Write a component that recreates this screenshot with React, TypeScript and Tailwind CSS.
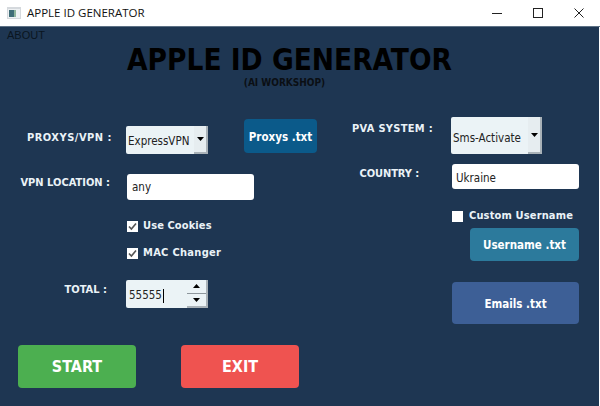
const labelFont = "font-['DejaVu_Sans_Condensed'] font-bold text-[11px] text-[#eaf2f7] whitespace-nowrap";
const fieldFont = "font-['DejaVu_Sans_Condensed'] text-[11.5px] text-[#222]";

function Caret() {
  return (
    <svg width="7" height="6" viewBox="0 0 7 4" className="block">
      <path d="M0 0h7L3.5 4z" fill="#000" />
    </svg>
  );
}

function CheckBox({ checked }: { checked?: boolean }) {
  return (
    <span className="flex h-[11px] w-[11px] items-center justify-center bg-white">
      {checked && (
        <svg width="9" height="9" viewBox="0 0 9 9">
          <path d="M1 4.5l2.4 2.6L8 1.5" fill="none" stroke="#555" strokeWidth="1.6" />
        </svg>
      )}
    </span>
  );
}

function Select({ value, w, h, btn, pad }: { value: string; w: string; h: string; btn: string; pad: string }) {
  return (
    <div className={`flex ${w} ${h} rounded-[2px] bg-[#ebf3f6]`}>
      <div className={`flex flex-1 items-center pl-[2px] ${pad} ${fieldFont}`}>{value}</div>
      <div className={`flex ${btn} items-center justify-center border-r-2 border-b-2 border-[#a9b2b8] bg-[#e6edf0]`}>
        <Caret />
      </div>
    </div>
  );
}

function Btn({ children, cls }: { children: string; cls: string }) {
  return (
    <div className={`flex items-center justify-center rounded-[4px] font-['DejaVu_Sans_Condensed'] font-bold text-white ${cls}`}>
      {children}
    </div>
  );
}

export default function App() {
  return (
    <div className="flex h-[406px] w-[600px] flex-col overflow-hidden bg-[#1e3652]">
      <div className="flex h-[27px] shrink-0 items-center border-b border-[#5d7185] bg-white pl-[7px]">
        <svg width="14" height="12" viewBox="0 0 14 12" className="mr-[6px]">
          <rect width="14" height="12" fill="#d5d9dd" />
          <rect x="1" y="2" width="12" height="9" fill="#eef1f3" />
          <rect x="2" y="3" width="5" height="7" fill="#3f6d77" />
          <rect x="7" y="3" width="2" height="7" fill="#8fb59d" />
        </svg>
        <span className="font-['Open_Sans'] text-[11.5px] text-[#111]">APPLE ID GENERATOR</span>
        <div className="ml-auto flex items-center">
          <svg width="10" height="10" viewBox="0 0 10 10" className="mr-[31px]"><path d="M0 5.5h10" stroke="#222" /></svg>
          <svg width="10" height="10" viewBox="0 0 10 10" className="mr-[31px]"><rect x=".5" y=".5" width="9" height="9" fill="none" stroke="#222" /></svg>
          <svg width="10" height="10" viewBox="0 0 10 10" className="mr-[16px]"><path d="M.5.5l9 9M9.5.5l-9 9" stroke="#222" /></svg>
        </div>
      </div>

      <div className="flex flex-1 flex-col border-r border-white">
        <div className="pl-[7px] pt-[2px] font-['Liberation_Sans'] text-[11px] leading-[13px] text-[#0a1520]">ABOUT</div>
        <div className="mt-[1px] pr-[20px] text-center font-['DejaVu_Sans_Condensed'] text-[29.5px] leading-[34px] font-bold text-black">
          APPLE ID GENERATOR
        </div>
        <div className="pr-[30px] pt-[1px] text-center font-['DejaVu_Sans_Condensed'] text-[10px] leading-[10px] font-bold text-[#0b0f14]">(AI WORKSHOP)</div>

        <div className="flex flex-1">
          <div className="flex w-[350px] shrink-0 flex-col">
            <div className="mt-[31px] flex items-start">
              <div className={`mt-[11px] w-[112px] text-right tracking-[0.5px] ${labelFont}`}>PROXYS/VPN :</div>
              <div className="ml-[14px] mt-[7px]">
                <Select value="ExpressVPN" w="w-[82px]" h="h-[28px]" btn="w-[14px]" pad="pt-[4px]" />
              </div>
              <Btn cls="ml-[36px] h-[34px] w-[73px] bg-[#0b5a8a] pt-[3px] text-[11.5px]">Proxys .txt</Btn>
            </div>
            <div className="mt-[20px] flex items-center">
              <div className={`w-[110px] pb-[8px] text-right ${labelFont}`}>VPN LOCATION :</div>
              <div className={`ml-[17px] flex h-[26px] w-[127px] items-center rounded-[3px] bg-white pl-[5px] pt-[2px] ${fieldFont}`}>any</div>
            </div>
            <div className="ml-[127px] mt-[19px] flex h-[14px] items-center gap-[5px]">
              <CheckBox checked />
              <span className={`tracking-[0.1px] ${labelFont}`}>Use Cookies</span>
            </div>
            <div className="ml-[127px] mt-[13px] flex h-[14px] items-center gap-[5px]">
              <CheckBox checked />
              <span className={`tracking-[0.3px] ${labelFont}`}>MAC Changer</span>
            </div>
            <div className="mt-[20px] flex items-center">
              <div className={`w-[107px] pb-[8px] text-right ${labelFont}`}>TOTAL :</div>
              <div className="ml-[19px] flex h-[28px] w-[82px] rounded-[2px] bg-[#ebf3f6]">
                <div className={`flex flex-1 items-center pl-[3px] pt-[4px] ${fieldFont}`}>
                  55555<span className="ml-px h-[14px] w-px bg-black" />
                </div>
                <div className="flex w-[21px] flex-col border-r-2 border-b-2 border-[#a9b2b8]">
                  <div className="flex flex-1 items-center justify-center border-b border-[#8d969c]">
                    <svg width="7" height="4" viewBox="0 0 7 4"><path d="M0 4h7L3.5 0z" fill="#000" /></svg>
                  </div>
                  <div className="flex flex-1 items-center justify-center">
                    <Caret />
                  </div>
                </div>
              </div>
            </div>
            <div className="mt-[37px] flex pl-[18px]">
              <Btn cls="h-[43px] w-[118px] bg-[#4caf50] text-[16px]">START</Btn>
              <Btn cls="ml-[45px] h-[43px] w-[118px] bg-[#ef5350] text-[16px]">EXIT</Btn>
            </div>
          </div>

          <div className="flex flex-1 flex-col">
            <div className="mt-[29px] flex items-start">
              <div className={`mt-[4px] w-[83px] text-right tracking-[0.3px] ${labelFont}`}>PVA SYSTEM :</div>
              <div className="ml-[18px]">
                <Select value="Sms-Activate" w="w-[91px]" h="h-[37px]" btn="w-[14px]" pad="pt-[6px]" />
              </div>
            </div>
            <div className="mt-[10px] flex items-start">
              <div className={`mt-[2px] w-[69px] text-right tracking-[-0.1px] ${labelFont}`}>COUNTRY :</div>
              <div className={`ml-[33px] flex h-[25px] w-[127px] items-center rounded-[3px] bg-white pl-[4px] pt-[4px] ${fieldFont}`}>Ukraine</div>
            </div>
            <div className="ml-[102px] mt-[20px] flex h-[14px] items-center gap-[6px]">
              <CheckBox />
              <span className={`tracking-[0.15px] ${labelFont}`}>Custom Username</span>
            </div>
            <Btn cls="ml-[120px] mt-[5px] h-[33px] w-[109px] bg-[#2c7a9c] pt-[3px] text-[11.5px]">Username .txt</Btn>
            <Btn cls="ml-[102px] mt-[21px] h-[42px] w-[127px] bg-[#3d5f96] pt-[3px] text-[11.5px]">Emails .txt</Btn>
          </div>
        </div>
      </div>
    </div>
  );
}
